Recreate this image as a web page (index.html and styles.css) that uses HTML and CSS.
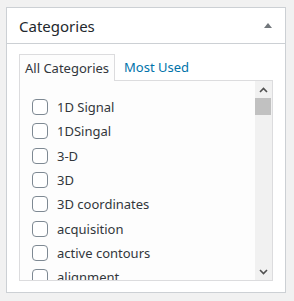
FILE: index.html
```html
<!DOCTYPE html>
<html lang="en">
<head>
    <meta charset="UTF-8">
    <title>Categories</title>
    <link rel="stylesheet" href="styles.css">
</head>
<body>
    <div class="postbox">
        <!-- Cabeçalho -->
        <div class="postbox-header">
            <h2 class="hndle">Categories</h2>
            <span class="toggle-arrow"></span>
        </div>

        <div class="inside">
            <!-- Abas -->
            <ul class="category-tabs">
                <li class="tab active">All Categories</li>
                <li class="tab"><a href="#">Most Used</a></li>
            </ul>

            <!-- Lista -->
            <div class="tabs-panel">
                <ul class="categorychecklist">
                    <li><span class="check"></span>1D Signal</li>
                    <li><span class="check"></span>1DSingal</li>
                    <li><span class="check"></span>3-D</li>
                    <li><span class="check"></span>3D</li>
                    <li><span class="check"></span>3D coordinates</li>
                    <li><span class="check"></span>acquisition</li>
                    <li><span class="check"></span>active contours</li>
                    <li><span class="check"></span>alignment</li>
                </ul>
                <div class="scrollbar">
                    <span class="arrow">
                        <svg width="9" height="6" viewBox="0 0 9 6"><path d="M1 5 L4.5 1.5 L8 5" fill="none" stroke="#505050" stroke-width="1.6"/></svg>
                    </span>
                    <span class="thumb"></span>
                    <span class="track"></span>
                    <span class="arrow">
                        <svg width="9" height="6" viewBox="0 0 9 6"><path d="M1 1 L4.5 4.5 L8 1" fill="none" stroke="#505050" stroke-width="1.6"/></svg>
                    </span>
                </div>
            </div>
        </div>
    </div>
</body>
</html>
```

FILE: styles.css
```css
body {
    margin: 0;
    padding: 7px 8px 8px 6px;
    background-color: #f1f1f1;
    font-family: "Noto Sans", "Open Sans", sans-serif;
    font-size: 13px;
    color: #32373c;
}

.postbox {
    width: 278px;
    background: #fff;
    border: 1px solid #ccd0d4;
}

.postbox-header {
    display: flex;
    align-items: center;
    justify-content: space-between;
    height: 35px;
    padding: 0 13px 0 12px;
    border-bottom: 1px solid #ccd0d4;
}

.hndle {
    margin: 0;
    font-size: 15px;
    font-weight: 400;
    color: #23282d;
}

.toggle-arrow {
    width: 0;
    height: 0;
    border-left: 4px solid transparent;
    border-right: 4px solid transparent;
    border-bottom: 5px solid #72777c;
}

.inside {
    padding: 9px 12px 11px 12px;
}

.category-tabs {
    display: flex;
    align-items: flex-end;
    margin: 0;
    padding: 0;
    list-style: none;
}

.tab {
    height: 26px;
    line-height: 26px;
    padding: 0 5px;
    border: 1px solid transparent;
    border-bottom: none;
}

.tab.active {
    background: #fdfdfd;
    border-color: #dcdcde;
    margin-bottom: -1px;
    position: relative;
}

.tab a {
    color: #0073aa;
    text-decoration: none;
    padding-left: 3px;
}

.tabs-panel {
    display: flex;
    height: 199px;
    background: #fdfdfd;
    border: 1px solid #dcdcde;
    overflow: hidden;
}

.categorychecklist {
    flex: 1;
    margin: 0;
    padding: 14px 0 0 12px;
    list-style: none;
}

.categorychecklist li {
    display: flex;
    align-items: center;
    height: 24.3px;
    white-space: nowrap;
}

.check {
    flex: none;
    width: 14px;
    height: 14px;
    margin-right: 9px;
    background: #fff;
    border: 1px solid #7e8993;
    border-radius: 4px;
}

.scrollbar {
    display: flex;
    flex-direction: column;
    width: 17px;
    background: #f1f1f1;
}

.arrow {
    display: flex;
    align-items: center;
    justify-content: center;
    height: 17px;
}

.thumb {
    height: 17px;
    margin: 0 1px 0 0;
    background: #c1c1c1;
}

.track {
    flex: 1;
}
```
